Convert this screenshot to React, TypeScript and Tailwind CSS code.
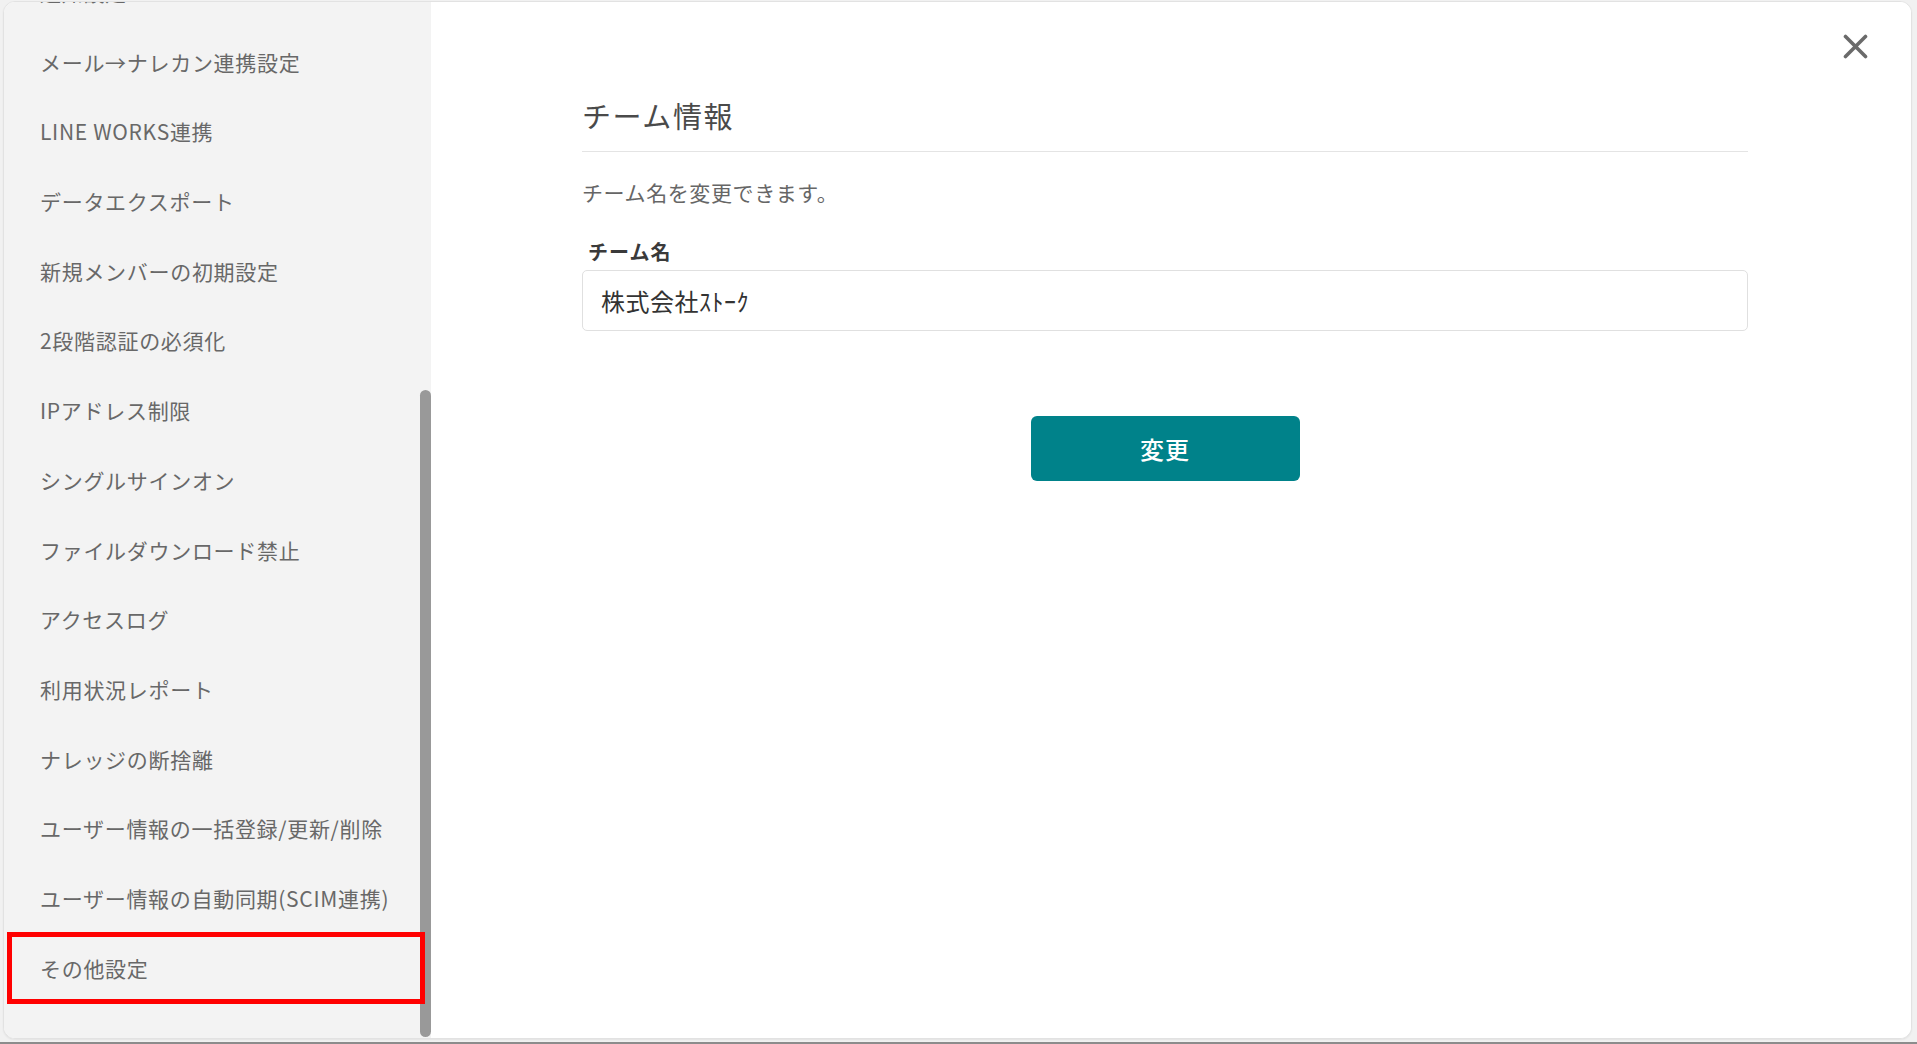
import React from "react";

const items = [
  "通知設定",
  "メール→ナレカン連携設定",
  "LINE WORKS連携",
  "データエクスポート",
  "新規メンバーの初期設定",
  "2段階認証の必須化",
  "IPアドレス制限",
  "シングルサインオン",
  "ファイルダウンロード禁止",
  "アクセスログ",
  "利用状況レポート",
  "ナレッジの断捨離",
  "ユーザー情報の一括登録/更新/削除",
  "ユーザー情報の自動同期(SCIM連携)",
  "その他設定",
];

export default function App() {
  return (
    <div className="relative w-[1917px] h-[1044px] bg-[#f1f1f1] font-['Noto_Sans_CJK_JP',sans-serif] overflow-hidden">
      <div className="flex flex-col h-full">
        <div className="flex-1 pt-[1px] pl-[3px] pr-[5px] pb-[3px]">
          <div className="flex h-[1038px] rounded-[12px] border border-[#e2e2e2] overflow-hidden bg-white shadow-[0_1px_2px_rgba(0,0,0,0.06)]">
            {/* Sidebar */}
            <div className="flex w-[427px] bg-[#f3f3f3] overflow-hidden">
              <div className="w-[416px] overflow-hidden">
                <div className="mt-[-44.85px]">
                  {items.map((t) => (
                    <div
                      key={t}
                      className="h-[69.7px] flex items-center pl-[36px] text-[21px] leading-[30px] tracking-[0.7px] text-[#686868] whitespace-nowrap"
                    >
                      {t}
                    </div>
                  ))}
                </div>
              </div>
              <div className="w-[11px] flex flex-col pt-[388px] pb-[1px]">
                <div className="flex-1 rounded-full bg-[#999999]" />
              </div>
            </div>
            {/* Main */}
            <div className="relative flex-1 bg-white pl-[151px] pt-[92px]">
              <div className="w-[1166px]">
                <div className="pb-[15px] border-b border-[#e4e4e4]">
                  <h1 className="text-[29px] leading-[42px] tracking-[1.6px] text-[#4a4a4a] font-normal">
                    チーム情報
                  </h1>
                </div>
                <p className="mt-[26px] text-[21px] leading-[28px] tracking-[0.6px] text-[#666666]">
                  チーム名を変更できます。
                </p>
                <div className="mt-[32px] pl-[6px] text-[20px] leading-[28px] font-bold tracking-[1px] text-[#3a3a3a]">
                  チーム名
                </div>
                <div className="mt-[4px] h-[61px] rounded-[5px] border border-[#e0e0e0] flex items-center pl-[18px] text-[24px] tracking-[0.5px] text-[#333333]">
                  株式会社ｽﾄｰｸ
                </div>
                <div className="mt-[85px] flex justify-center">
                  <button className="w-[269px] h-[65px] rounded-[6px] bg-[#00828a] text-white text-[24px] font-medium tracking-[1px]">
                    変更
                  </button>
                </div>
              </div>
              <button className="absolute top-[32px] right-[43px] w-[25px] h-[25px] flex items-center justify-center">
                <svg width="25" height="25" viewBox="0 0 25 25">
                  <path d="M2.5 2.5 L22.5 22.5 M22.5 2.5 L2.5 22.5" stroke="#6a6a6a" strokeWidth="3.6" strokeLinecap="round" />
                </svg>
              </button>
            </div>
          </div>
        </div>
        <div className="h-[2px] bg-[#8c8c8c]" />
      </div>
      {/* annotation box */}
      <div className="absolute left-[7px] top-[932px] w-[418px] h-[72px] border-[5px] border-[#ff0000]" />
    </div>
  );
}
